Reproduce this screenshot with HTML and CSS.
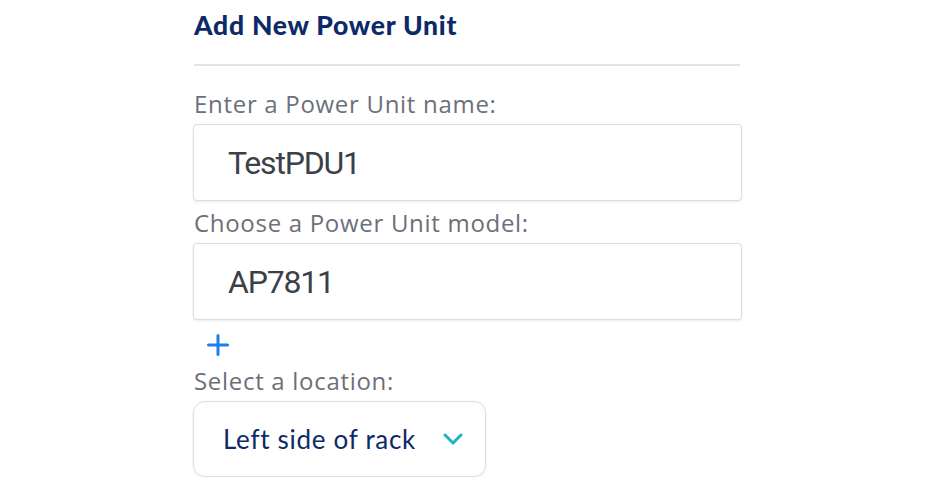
FILE: index.html
```html
<!DOCTYPE html>
<html lang="en">
<head>
<meta charset="utf-8">
<title>Add New Power Unit</title>
<link rel="stylesheet" href="styles.css">
</head>
<body>
<main class="form">
  <h2 class="title">Add New Power Unit</h2>
  <hr class="divider">
  <label class="field-label" for="pu-name">Enter a Power Unit name:</label>
  <input class="text-input" id="pu-name" type="text" value="TestPDU1">
  <label class="field-label gap-top" for="pu-model">Choose a Power Unit model:</label>
  <input class="text-input" id="pu-model" type="text" value="AP7811">
  <button class="add-btn" type="button" aria-label="Add model">
    <svg width="22" height="22" viewBox="0 0 22 22" aria-hidden="true">
      <path d="M11 1.5v19M1.5 11h19" stroke="currentColor" stroke-width="3" stroke-linecap="round" fill="none"/>
    </svg>
  </button>
  <label class="field-label loc-label">Select a location:</label>
  <div class="select">
    <span class="select-value">Left side of rack</span>
    <svg class="chevron" width="20" height="12" viewBox="0 0 20 12" aria-hidden="true">
      <path d="M2 2l8 8 8-8" stroke="currentColor" stroke-width="3" stroke-linecap="round" stroke-linejoin="round" fill="none"/>
    </svg>
  </div>
</main>
</body>
</html>
```

FILE: styles.css
```css
html, body {
  margin: 0;
  padding: 0;
  background: #ffffff;
}

.form {
  margin-left: 193px;
  width: 549px;
  display: flex;
  flex-direction: column;
  align-items: flex-start;
}

.title {
  margin: 9px 0 0 1px;
  font-family: "Lato", "Liberation Sans", sans-serif;
  font-weight: 900;
  font-size: 26.5px;
  line-height: 32px;
  color: #0c2a67;
  letter-spacing: 0.75px;
}

.divider {
  align-self: stretch;
  margin: 23px 2px 0 1px;
  border: 0;
  height: 2px;
  background: #e0e3e7;
}

.field-label {
  margin-top: 24px;
  margin-left: 1px;
  font-family: "Open Sans", "Liberation Sans", sans-serif;
  font-size: 24px;
  line-height: 28px;
  color: #6b7079;
  letter-spacing: 0.7px;
}

.field-label.gap-top {
  margin-top: 8px;
}

.text-input {
  box-sizing: border-box;
  align-self: stretch;
  margin-top: 6px;
  height: 77px;
  padding: 0 0 0 34px;
  border: 1px solid #dcdde0;
  border-radius: 4px;
  box-shadow: 0 1px 3px rgba(0, 0, 0, 0.08);
  background: #ffffff;
  font-family: "Roboto", "Liberation Sans", sans-serif;
  font-size: 32px;
  letter-spacing: -1.2px;
  color: #3c4048;
  outline: none;
}

.add-btn {
  margin-top: 13px;
  margin-left: 13px;
  padding: 0;
  width: 24px;
  height: 24px;
  border: 0;
  background: none;
  color: #1a7fe9;
  display: flex;
  align-items: center;
  justify-content: center;
}

.field-label.loc-label {
  margin-top: 10px;
}

.select {
  box-sizing: border-box;
  margin-top: 6px;
  width: 293px;
  height: 76px;
  padding: 0 22px 0 29px;
  border: 1px solid #dcdde0;
  border-radius: 12px;
  box-shadow: 0 1px 3px rgba(0, 0, 0, 0.08);
  display: flex;
  align-items: center;
  justify-content: space-between;
}

.select-value {
  font-family: "Lato", "Liberation Sans", sans-serif;
  font-size: 26px;
  letter-spacing: 0.7px;
  color: #0c2a67;
}

.chevron {
  color: #1cb3c8;
}
```
